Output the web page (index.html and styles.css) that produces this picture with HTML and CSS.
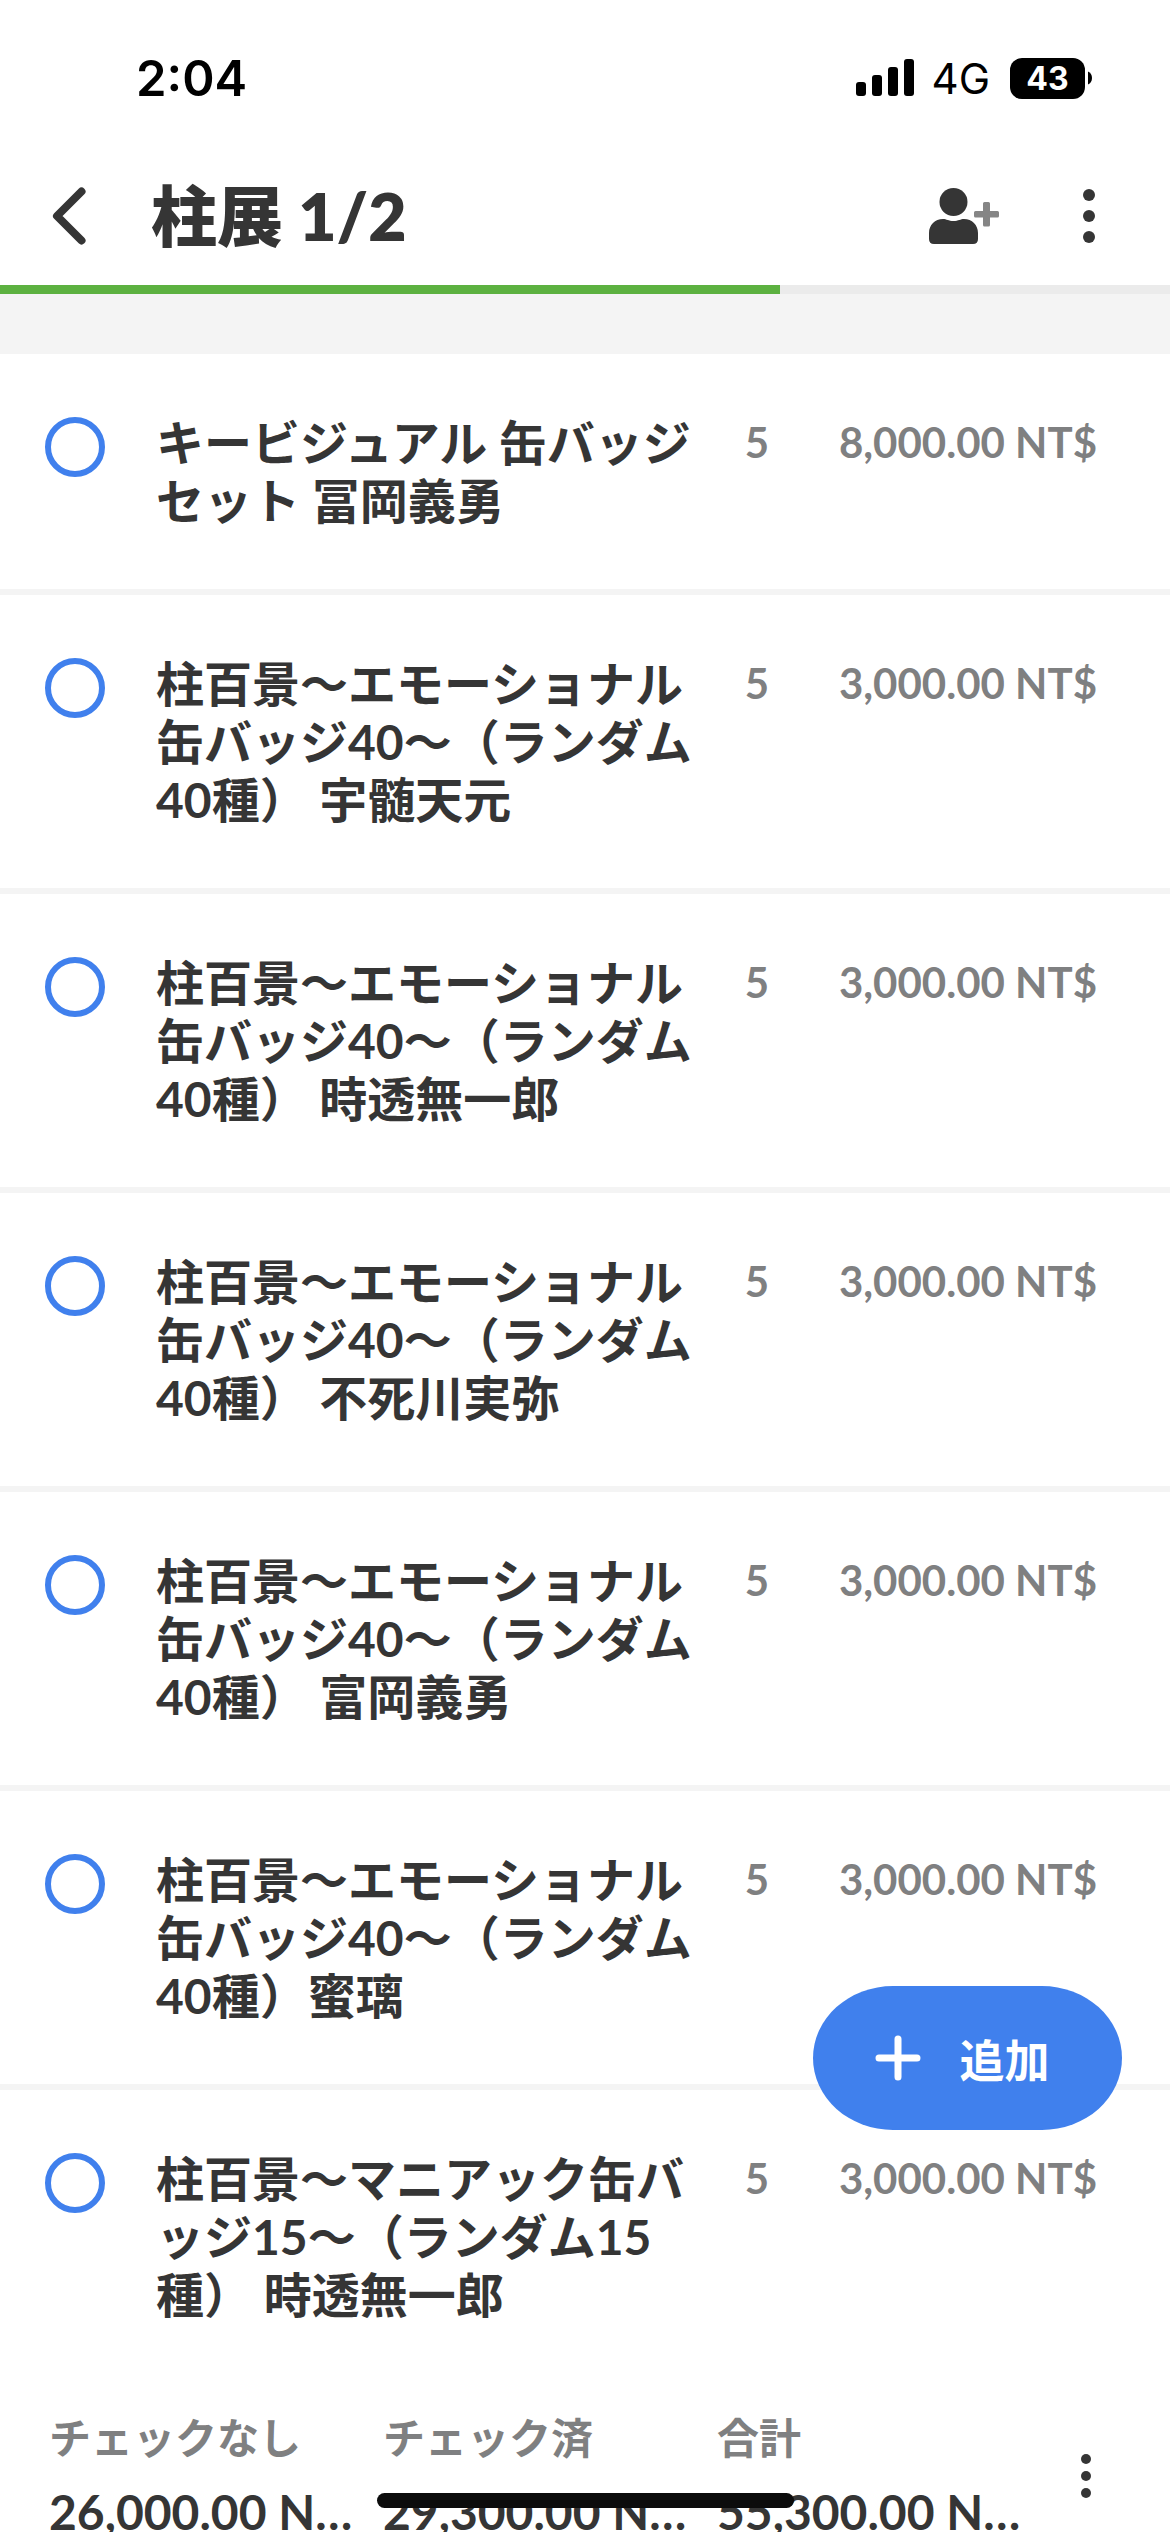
FILE: index.html
```html
<!DOCTYPE html>
<html lang="ja">
<head>
<meta charset="utf-8">
<meta name="viewport" content="width=device-width, initial-scale=1">
<title>柱展 1/2</title>
<link rel="stylesheet" href="styles.css">
</head>
<body>
<div class="app">
  <div class="status">
    <span class="clock">2:04</span>
    <div class="indicators">
      <svg class="signal" width="58" height="38" viewBox="0 0 58 38" fill="#000" aria-hidden="true">
        <rect x="0" y="23" width="10" height="14" rx="3"/>
        <rect x="16" y="16" width="10" height="21" rx="3"/>
        <rect x="32" y="8" width="10" height="29" rx="3"/>
        <rect x="48" y="0" width="10" height="37" rx="3"/>
      </svg>
      <span class="network">4G</span>
      <div class="battery">
        <span class="level">43</span>
        <svg width="4" height="14" viewBox="0 0 4 14" aria-hidden="true"><path d="M0 0.500C2.500 1.500 4 4 4 7S2.500 12.500 0 13.500z"/></svg>
      </div>
    </div>
  </div>

  <header class="header">
    <button class="icon-button" type="button" aria-label="戻る">
      <svg width="34" height="60" viewBox="0 0 34 60" fill="none" stroke="#353535" stroke-width="8" stroke-linecap="round" stroke-linejoin="round"><path d="M29.500 5.500L5 30l24.500 24.500"/></svg>
    </button>
    <h1 class="title">柱展 1/2</h1>
    <button class="icon-button" type="button" aria-label="メンバーを追加">
      <svg width="70" height="56" viewBox="0 0 70 56">
        <circle cx="24.500" cy="14" r="14" fill="#353535"/>
        <path d="M0 45C0 37 6 31 14 31c3.500 0 5.500 2 10.500 2S31.500 31 35 31c8 0 14 6 14 14v6q0 5-5 5H5q-5 0-5-5z" fill="#353535"/>
        <path d="M55.500 14h4a1.500 1.500 0 0 1 1.500 1.500V23h7.500a1.500 1.500 0 0 1 1.500 1.500v3.500a1.500 1.500 0 0 1-1.500 1.500H61v7.500a1.500 1.500 0 0 1-1.500 1.500h-4a1.500 1.500 0 0 1-1.500-1.500v-7.500h-7.500a1.500 1.500 0 0 1-1.500-1.500v-3.500a1.500 1.500 0 0 1 1.500-1.500H54v-7.500a1.500 1.500 0 0 1 1.500-1.500z" fill="#858585"/>
      </svg>
    </button>
    <button class="icon-button menu" type="button" aria-label="メニュー">
      <svg width="12" height="54" viewBox="0 0 12 54" fill="#353535"><circle cx="6" cy="6" r="6"/><circle cx="6" cy="27" r="6"/><circle cx="6" cy="48" r="6"/></svg>
    </button>
  </header>
  <progress class="progress" value="2" max="3" aria-label="チェック済"></progress>

  <main class="content">
    <ul class="list">
      <li class="item"><input class="check" type="checkbox" id="i1"><label class="name" for="i1">キービジュアル 缶バッジセット 冨岡義勇</label><span class="qty">5</span><span class="price">8,000.00 NT$</span></li>
      <li class="item"><input class="check" type="checkbox" id="i2"><label class="name" for="i2">柱百景〜エモーショナル缶バッジ40〜（ランダム40種） 宇髄天元</label><span class="qty">5</span><span class="price">3,000.00 NT$</span></li>
      <li class="item"><input class="check" type="checkbox" id="i3"><label class="name" for="i3">柱百景〜エモーショナル缶バッジ40〜（ランダム40種） 時透無一郎</label><span class="qty">5</span><span class="price">3,000.00 NT$</span></li>
      <li class="item"><input class="check" type="checkbox" id="i4"><label class="name" for="i4">柱百景〜エモーショナル缶バッジ40〜（ランダム40種） 不死川実弥</label><span class="qty">5</span><span class="price">3,000.00 NT$</span></li>
      <li class="item"><input class="check" type="checkbox" id="i5"><label class="name" for="i5">柱百景〜エモーショナル缶バッジ40〜（ランダム40種） 富岡義勇</label><span class="qty">5</span><span class="price">3,000.00 NT$</span></li>
      <li class="item"><input class="check" type="checkbox" id="i6"><label class="name" for="i6">柱百景〜エモーショナル缶バッジ40〜（ランダム40種）蜜璃</label><span class="qty">5</span><span class="price">3,000.00 NT$</span></li>
      <li class="item"><input class="check" type="checkbox" id="i7"><label class="name" for="i7">柱百景〜マニアック缶バッジ15〜（ランダム15種） 時透無一郎</label><span class="qty">5</span><span class="price">3,000.00 NT$</span></li>
    </ul>
  </main>

  <footer class="footer">
    <dl class="totals">
      <div class="total"><dt>チェックなし</dt><dd>26,000.00 NT$</dd></div>
      <div class="total"><dt>チェック済</dt><dd>29,300.00 NT$</dd></div>
      <div class="total"><dt>合計</dt><dd>55,300.00 NT$</dd></div>
    </dl>
    <button class="icon-button more" type="button" aria-label="合計の表示設定">
      <svg width="10" height="44" viewBox="0 0 10 44" fill="#353535"><circle cx="5" cy="5" r="5"/><circle cx="5" cy="22" r="5"/><circle cx="5" cy="39" r="5"/></svg>
    </button>
  </footer>

  <button class="add" type="button">
    <svg width="46" height="46" viewBox="0 0 46 46" fill="none" stroke="#fff" stroke-width="7" stroke-linecap="round" aria-hidden="true"><path d="M23 4v38M4 23h38"/></svg>
    追加
  </button>
  <div class="home-indicator"></div>
</div>
</body>
</html>
```
FILE: styles.css
```css
* {
  box-sizing: border-box;
}

body {
  margin: 0;
  background: #fff;
  color: #353535;
  font-family: Lato, "Noto Sans CJK JP", sans-serif;
  text-spacing-trim: space-all;
}

button {
  border: 0;
  padding: 0;
  background: none;
  font: inherit;
  color: inherit;
}

.app {
  position: relative;
  display: flex;
  flex-direction: column;
  height: 100vh;
  overflow: hidden;
}

.status {
  display: flex;
  align-items: center;
  justify-content: space-between;
  height: 156px;
  padding: 0 78px 0 136px;
  color: #000;
  font-family: Inter, sans-serif;
}

.clock {
  font-size: 49px;
  font-weight: 600;
}

.indicators {
  display: flex;
  align-items: center;
}

.network {
  margin: 0 20px 0 18px;
  font-size: 42px;
}

.battery {
  display: flex;
  align-items: center;
  gap: 3px;
}

.level {
  width: 75px;
  border-radius: 12px;
  background: #000;
  color: #fff;
  font-size: 32px;
  font-weight: 700;
  line-height: 41px;
  text-align: center;
}

.header {
  display: flex;
  align-items: center;
  height: 129px;
  padding: 0 75px 9px 52px;
}

.icon-button {
  display: flex;
}

.title {
  flex: 1;
  margin: 0 0 0 65px;
  font-size: 66px;
  font-weight: 800;
  line-height: 80px;
}

.menu {
  margin-left: 84px;
}

.progress {
  display: block;
  width: 100%;
  height: 9px;
  border: 0;
  background: #ebebeb;
  appearance: none;
}

.progress::-webkit-progress-bar {
  background: #ebebeb;
}

.progress::-webkit-progress-value {
  background: #5cb140;
}

.content {
  flex: 1;
  min-height: 0;
  overflow: hidden;
  padding-top: 60px;
  background: #f4f4f4;
}

.list {
  margin: 0;
  padding: 0;
  list-style: none;
}

.item {
  display: flex;
  align-items: flex-start;
  padding: 60px 73px 59px 45px;
  border-bottom: 6px solid #f4f4f4;
  background: #fff;
  font-size: 42px;
  font-weight: 700;
  line-height: 58px;
}

.check {
  flex: none;
  width: 60px;
  height: 60px;
  margin: 3px 51px 0 0;
  border: 6px solid #4080ed;
  border-radius: 50%;
  appearance: none;
}

.check:checked {
  background: #4080ed;
}

.name {
  flex: 1;
  font-size: 48px;
}

.qty,
.price {
  color: #7f8081;
  line-height: 56px;
  text-align: right;
}

.qty {
  width: 72px;
}

.price {
  width: 328px;
}

.footer {
  display: flex;
  flex: none;
  align-items: flex-start;
  height: 160px;
  padding: 37px 79px 0 49px;
  background: #fff;
}

.totals {
  display: flex;
  flex: 1;
  gap: 26px;
  min-width: 0;
  margin: 0;
}

.total {
  flex: 1;
  min-width: 0;
  font-weight: 700;
}

.total dt {
  color: #7f8081;
  font-size: 42px;
  line-height: 58px;
}

.total dd {
  margin: 16px 0 0;
  overflow: hidden;
  font-size: 48px;
  line-height: 58px;
  text-overflow: ellipsis;
  white-space: nowrap;
}

.more {
  margin: 45px 0 0 56px;
}

.add {
  position: absolute;
  right: 48px;
  bottom: 402px;
  display: flex;
  align-items: center;
  justify-content: center;
  gap: 38px;
  width: 309px;
  height: 144px;
  padding-right: 10px;
  border-radius: 80px / 72px;
  background: #4080ed;
  color: #fff;
  font-size: 45px;
  font-weight: 600;
}

.home-indicator {
  position: absolute;
  bottom: 24px;
  left: 50%;
  width: 417px;
  height: 15px;
  margin-left: -208px;
  border-radius: 8px;
  background: #0c0c0c;
}
```
